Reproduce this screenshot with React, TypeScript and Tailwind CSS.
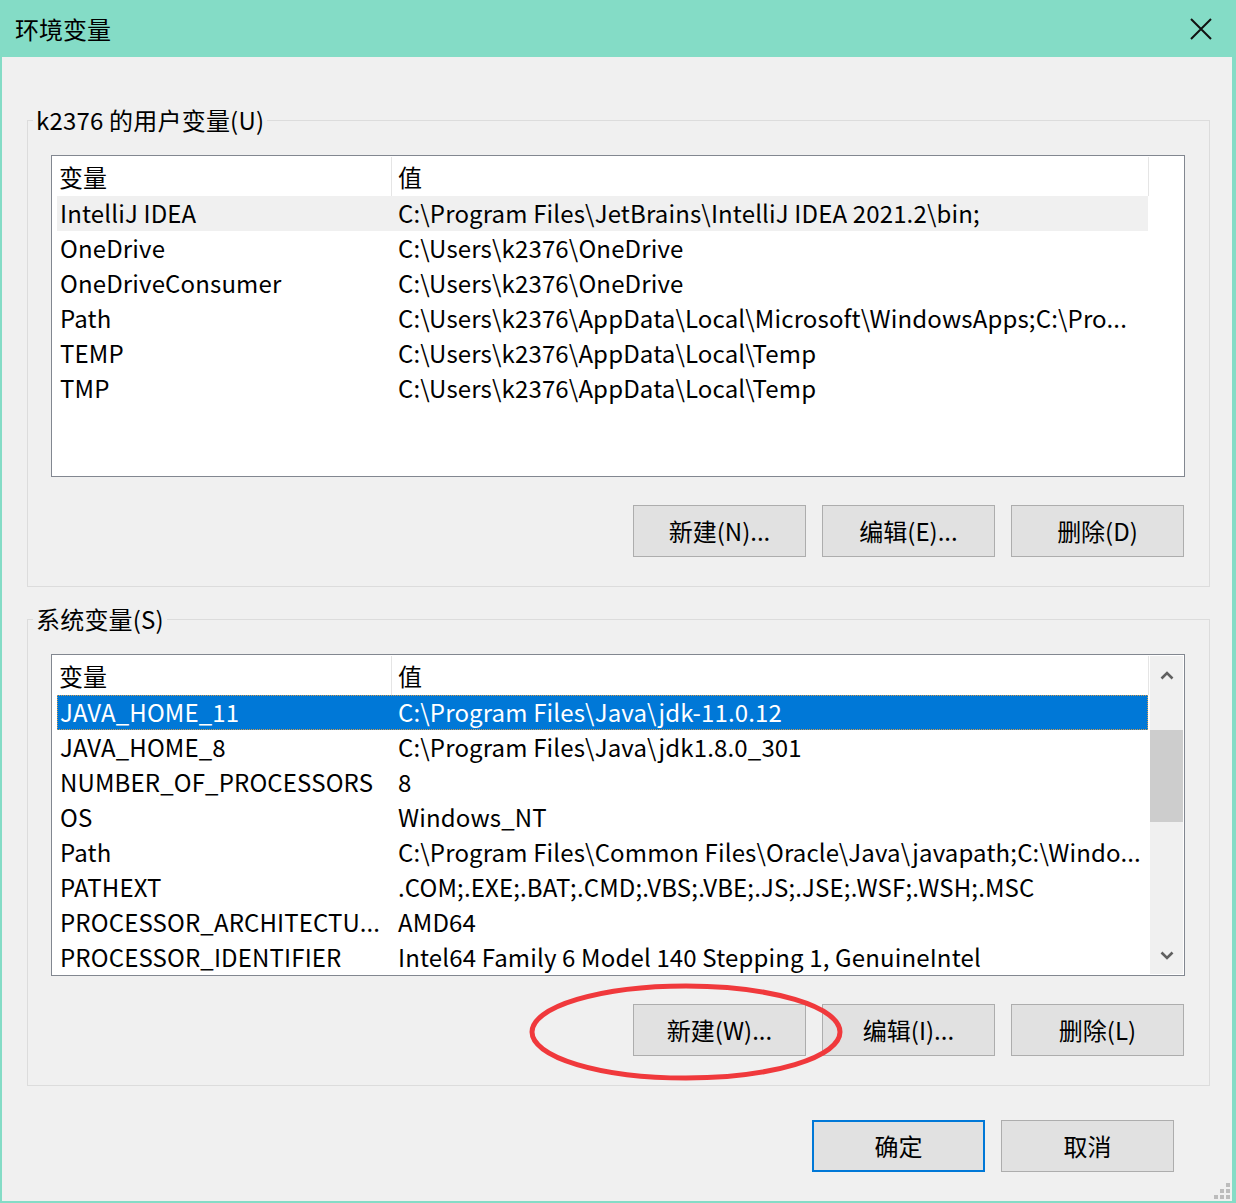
import type { ReactNode } from 'react'

type Row = { name: string; value: string }

const userRows: Row[] = [
  { name: 'IntelliJ IDEA', value: 'C:\\Program Files\\JetBrains\\IntelliJ IDEA 2021.2\\bin;' },
  { name: 'OneDrive', value: 'C:\\Users\\k2376\\OneDrive' },
  { name: 'OneDriveConsumer', value: 'C:\\Users\\k2376\\OneDrive' },
  { name: 'Path', value: 'C:\\Users\\k2376\\AppData\\Local\\Microsoft\\WindowsApps;C:\\Pro...' },
  { name: 'TEMP', value: 'C:\\Users\\k2376\\AppData\\Local\\Temp' },
  { name: 'TMP', value: 'C:\\Users\\k2376\\AppData\\Local\\Temp' },
]

const systemRows: Row[] = [
  { name: 'JAVA_HOME_11', value: 'C:\\Program Files\\Java\\jdk-11.0.12' },
  { name: 'JAVA_HOME_8', value: 'C:\\Program Files\\Java\\jdk1.8.0_301' },
  { name: 'NUMBER_OF_PROCESSORS', value: '8' },
  { name: 'OS', value: 'Windows_NT' },
  { name: 'Path', value: 'C:\\Program Files\\Common Files\\Oracle\\Java\\javapath;C:\\Windo...' },
  { name: 'PATHEXT', value: '.COM;.EXE;.BAT;.CMD;.VBS;.VBE;.JS;.JSE;.WSF;.WSH;.MSC' },
  { name: 'PROCESSOR_ARCHITECTU...', value: 'AMD64' },
  { name: 'PROCESSOR_IDENTIFIER', value: 'Intel64 Family 6 Model 140 Stepping 1, GenuineIntel' },
]

function Chevron({ down }: { down?: boolean }) {
  return (
    <svg width="14" height="9" viewBox="0 0 14 9" className={down ? 'rotate-180' : ''}>
      <polyline points="1.5,7.5 7,2 12.5,7.5" fill="none" stroke="#606060" strokeWidth="2.6" />
    </svg>
  )
}

function Scrollbar() {
  return (
    <div className="w-[33px] mr-[1px] my-[1px] bg-[#f0f0f0] flex flex-col shrink-0">
      <div className="h-[38px] flex items-center justify-center">
        <Chevron />
      </div>
      <div className="flex-1 pt-[36px]">
        <div className="h-[92px] bg-[#cdcdcd]" />
      </div>
      <div className="h-[38px] flex items-center justify-center">
        <Chevron down />
      </div>
    </div>
  )
}

function ListView({
  rows,
  selected,
  hover,
  scroll,
}: {
  rows: Row[]
  selected?: number
  hover?: number
  scroll?: boolean
}) {
  return (
    <div className="h-[322px] border border-[#828790] bg-white flex overflow-hidden">
      <div className="flex-1 pl-[5px] pt-[1px] overflow-hidden">
        <div className="h-[39px] flex">
          <div className="w-[334px] pl-[2px] flex items-center">变量</div>
          <div className="w-px bg-[#e5e5e5]" />
          <div className="w-[756px] pl-[6px] flex items-center">值</div>
          <div className="w-px bg-[#e5e5e5]" />
        </div>
        {rows.map((r, i) => {
          const sel = i === selected
          const hov = i === hover
          return (
            <div
              key={r.name}
              className={
                'h-[35px] w-[1091px] flex items-center whitespace-nowrap tracking-[0.15px] pb-[2px] ' +
                (sel
                  ? 'bg-[#0078d7] text-white outline-1 outline-dotted outline-[#d09a50] -outline-offset-1'
                  : hov
                    ? 'bg-[#f0f0f0]'
                    : '')
              }
            >
              <div className="w-[335px] pl-[3px] overflow-hidden">{r.name}</div>
              <div className="flex-1 pl-[6px]">{r.value}</div>
            </div>
          )
        })}
      </div>
      {scroll && <Scrollbar />}
    </div>
  )
}

function Button({ label, primary }: { label: string; primary?: boolean }) {
  return (
    <button
      className={
        'w-[173px] h-[52px] bg-[#e1e1e1] flex items-center justify-center ' +
        (primary ? 'border-2 border-[#0078d7]' : 'border border-[#adadad]')
      }
    >
      {label}
    </button>
  )
}

function GroupBox({ title, children, className }: { title: string; children: ReactNode; className?: string }) {
  return (
    <fieldset className={'border border-[#dcdcdc] pl-[5px] ml-[25px] mr-[22px] ' + (className ?? '')}>
      <legend className="px-[3px] leading-[30px] tracking-[0.2px]">{title}</legend>
      <div className="pl-[18px] pr-[24px] pt-[20px] pb-[29px]">{children}</div>
    </fieldset>
  )
}

export default function App() {
  return (
    <div className="relative w-[1236px] h-[1203px] bg-[#84dcc6] flex flex-col text-[24px] text-black font-['Noto_Sans_CJK_SC',sans-serif]">
      <div className="h-[57px] shrink-0 flex items-center justify-between pl-[15px] pr-[24px]">
        <span>环境变量</span>
        <svg width="22" height="22" viewBox="0 0 22 22">
          <path d="M1 1L21 21M21 1L1 21" stroke="#111" strokeWidth="2" />
        </svg>
      </div>
      <div className="flex-1 ml-[2px] mr-[4px] mb-[2px] bg-[#f0f0f0] flex flex-col">
        <GroupBox title="k2376 的用户变量(U)" className="mt-[48px]">
          <ListView rows={userRows} hover={0} />
          <div className="flex justify-end gap-[16px] mt-[28px] pr-px">
            <Button label="新建(N)..." />
            <Button label="编辑(E)..." />
            <Button label="删除(D)" />
          </div>
        </GroupBox>
        <GroupBox title="系统变量(S)" className="mt-[17px]">
          <ListView rows={systemRows} selected={0} scroll />
          <div className="flex justify-end gap-[16px] mt-[28px] pr-px">
            <Button label="新建(W)..." />
            <Button label="编辑(I)..." />
            <Button label="删除(L)" />
          </div>
        </GroupBox>
        <div className="flex justify-end gap-[16px] mt-[34px] mr-[58px]">
          <Button label="确定" primary />
          <Button label="取消" />
        </div>
        <div className="flex-1 flex items-end justify-end pr-[2px] pb-[2px]">
          <div className="grid grid-cols-3 gap-[2px]">
            <span className="w-[4px] h-[4px]" />
            <span className="w-[4px] h-[4px]" />
            <span className="w-[4px] h-[4px] bg-[#bcbcbc]" />
            <span className="w-[4px] h-[4px]" />
            <span className="w-[4px] h-[4px] bg-[#bcbcbc]" />
            <span className="w-[4px] h-[4px] bg-[#bcbcbc]" />
            <span className="w-[4px] h-[4px] bg-[#bcbcbc]" />
            <span className="w-[4px] h-[4px] bg-[#bcbcbc]" />
            <span className="w-[4px] h-[4px] bg-[#bcbcbc]" />
          </div>
        </div>
      </div>
      <svg className="absolute left-[527px] top-[980px] pointer-events-none" width="320" height="106" viewBox="0 0 320 106">
        <ellipse cx="159" cy="52" rx="154" ry="46" fill="none" stroke="#f0393c" strokeWidth="5" />
      </svg>
    </div>
  )
}
